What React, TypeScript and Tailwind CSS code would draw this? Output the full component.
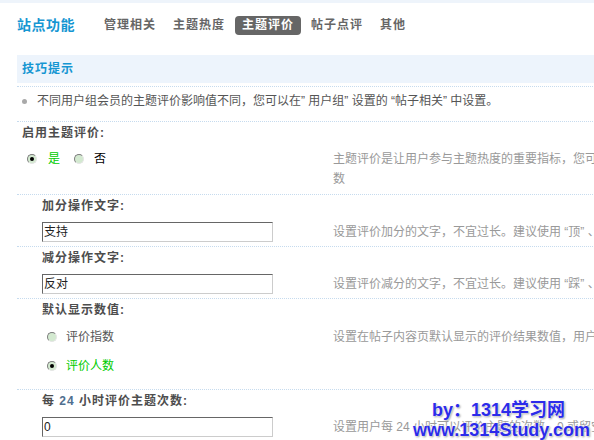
const tabs = ['管理相关', '主题热度', '主题评价', '帖子点评', '其他'];

function Radio({ checked }: { checked?: boolean }) {
  return (
    <span className="flex h-[10px] w-[10px] shrink-0 items-center justify-center rounded-full border border-t-[#7c7c7c] border-l-[#7c7c7c] border-r-[#e4e4e4] border-b-[#e4e4e4] bg-[#d3e9d0]">
      {checked && <span className="h-[4px] w-[4px] rounded-full bg-black" />}
    </span>
  );
}

function Label({ children, indent }: { children: React.ReactNode; indent?: boolean }) {
  return (
    <div
      className={
        indent
          ? 'border-t border-dotted border-[#c6dbee] pl-[25px] text-[12px] font-bold leading-[22px] tracking-[1px] text-[#4d4d4d]'
          : 'border-t border-dotted border-[#c6dbee] pl-[5px] text-[12px] font-bold leading-[22px] tracking-[1px] text-[#4d4d4d]'
      }>
      {children}
    </div>
  );
}

function TextInput({ value }: { value: string }) {
  return (
    <div className="h-[20px] w-[231px] border border-t-[#666] border-l-[#666] border-r-[#ccc] border-b-[#ccc] bg-white px-[1px] text-[12px] leading-[18px] text-[#222]">
      {value}
    </div>
  );
}

function Desc({ children }: { children: React.ReactNode }) {
  return <div className="w-[480px] text-[12px] leading-[20px] text-[#999]">{children}</div>;
}

export default function App() {
  return (
    <div className="relative h-[440px] w-[594px] overflow-hidden bg-white font-['Liberation_Sans','Noto_Sans_CJK_SC',sans-serif]">
      <div className="h-[3px] bg-[#eef4fb]" />

      <div className="flex h-[45px] items-center pl-[17px]">
        <h2 className="text-[14px] font-bold tracking-[0.5px] text-[#1596d2]">站点功能</h2>
        <ul className="ml-[22px] flex gap-[3px]">
          {tabs.map((t) => (
            <li
              key={t}
              className={
                t === '主题评价'
                  ? 'h-[19px] rounded-[4px] bg-[#666] px-[7px] text-[12px] font-bold leading-[19px] tracking-[1px] text-white'
                  : 'h-[19px] px-[7px] text-[12px] font-bold leading-[19px] tracking-[1px] text-[#666]'
              }>
              {t}
            </li>
          ))}
        </ul>
      </div>

      <div className="ml-[17px] mt-[7px] w-[820px]">
        <div className="flex h-[28px] items-center bg-[#edf4fc] px-[5px] text-[12px] font-bold tracking-[1px] text-[#1596d2]">
          技巧提示
        </div>

        <div className="mt-[3px] flex items-center border-t border-dotted border-[#c6dbee] pb-[10px] pl-[5px] pt-[4px] text-[12px] leading-[20px] text-[#555]">
          <span className="h-[5px] w-[5px] rounded-full bg-[#a9a9a9]" />
          <span className="ml-[10px]">
            不同用户组会员的主题评价影响值不同，您可以在” 用户组” 设置的 “帖子相关” 中设置。
          </span>
        </div>

        <Label>启用主题评价:</Label>
        <div className="flex pb-[5px] pt-[5px]">
          <div className="flex h-[20px] w-[316px] items-center pl-[10px] text-[12px]">
            <Radio checked />
            <span className="ml-[11px] text-[#00cc00]">是</span>
            <span className="ml-[14px]">
              <Radio />
            </span>
            <span className="ml-[10px] text-black">否</span>
          </div>
          <Desc>主题评价是让用户参与主题热度的重要指标，您可以设置主题热度计算时评价所占的权重分数</Desc>
        </div>

        <Label indent>加分操作文字:</Label>
        <div className="flex pb-[4px] pt-[5px]">
          <div className="w-[316px] pl-[25px]">
            <TextInput value="支持" />
          </div>
          <Desc>设置评价加分的文字，不宜过长。建议使用 “顶” 、“支持”</Desc>
        </div>

        <Label indent>减分操作文字:</Label>
        <div className="flex pb-[4px] pt-[5px]">
          <div className="w-[316px] pl-[25px]">
            <TextInput value="反对" />
          </div>
          <Desc>设置评价减分的文字，不宜过长。建议使用 “踩” 、“反对”</Desc>
        </div>

        <Label indent>默认显示数值:</Label>
        <div className="flex pb-[13px] pt-[6px]">
          <ul className="flex w-[316px] flex-col gap-[9px] pl-[30px] text-[12px] leading-[20px]">
            <li className="flex items-center">
              <Radio />
              <span className="ml-[9px] text-[#555]">评价指数</span>
            </li>
            <li className="flex items-center">
              <Radio checked />
              <span className="ml-[9px] text-[#00cc00]">评价人数</span>
            </li>
          </ul>
          <Desc>设置在帖子内容页默认显示的评价结果数值，用户可以点击切换</Desc>
        </div>

        <Label indent>
          每 <span className="text-[#4f6f8f]">24</span> 小时评价主题次数:
        </Label>
        <div className="flex pb-[4px] pt-[5px]">
          <div className="w-[316px] pl-[25px]">
            <TextInput value="0" />
          </div>
          <Desc>设置用户每 24 小时可以评价主题的次数，0 或留空为不限制</Desc>
        </div>
      </div>

      <div className="absolute left-[413px] top-[400px] text-[18px] font-bold leading-[20px] text-[#2b2bea] [text-shadow:0_0_2px_#fff,0_0_2px_#fff,1px_1px_2px_#888]">
        <div className="pl-[19px]">by：1314学习网</div>
        <div>www.1314Study.com</div>
      </div>
    </div>
  );
}
